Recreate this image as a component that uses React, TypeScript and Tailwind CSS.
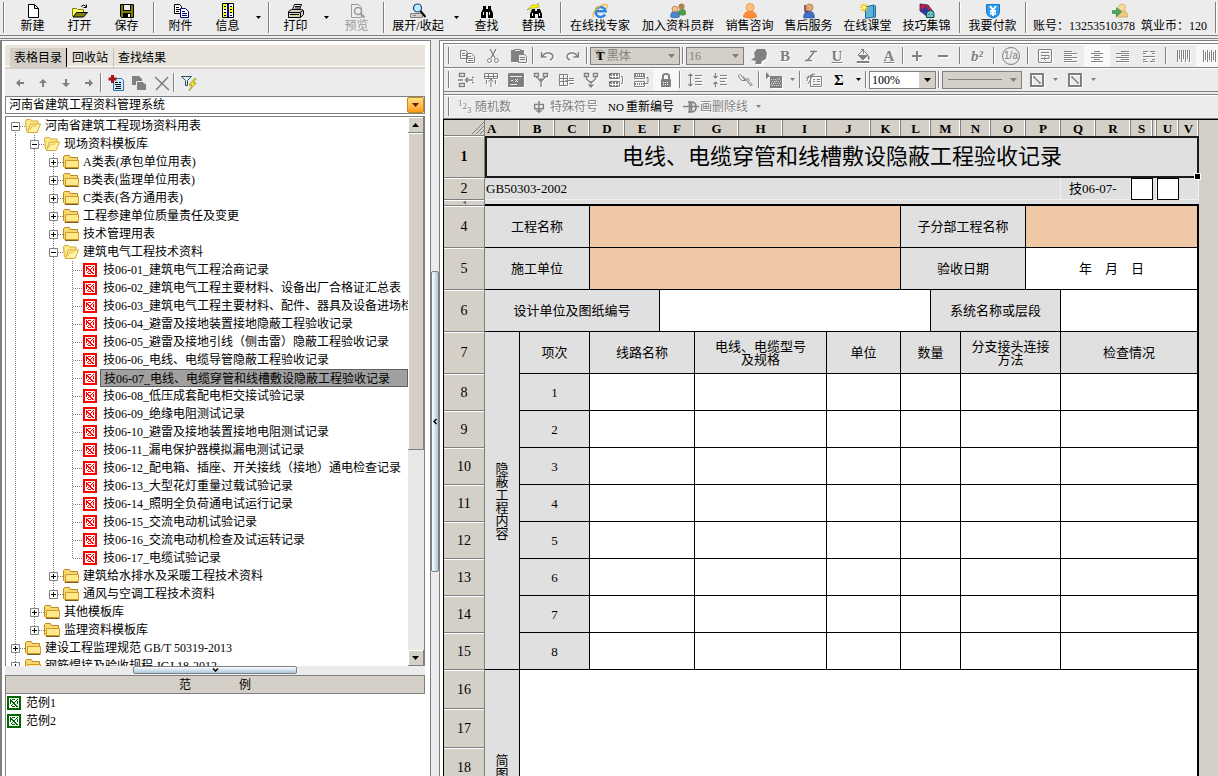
import React from "react";
import clsx from "clsx";

const song = "font-['Liberation_Serif','Noto_Sans_CJK_SC',serif]";

/* ---------- icons, all on a 16 x 16 grid ---------- */

const icons: Record<string, React.ReactNode> = {
  newFile: <path fill="#fff" stroke="#000" d="M3.5 1.5h6l4 4v9h-10zM9.500 1.500v4h4" />,
  open: (
    <>
      <path fill="#ffff66" stroke="#808000" d="M.5 13.500v-8h4l1 1h6v3" />
      <path fill="#808000" stroke="#000" d="M1 14l3.500-4.500h11l-4 4.500z" />
      <path stroke="#000" d="M9 3.500q3-3 5 0M14.500 1.500v3h-3" />
    </>
  ),
  save: (
    <>
      <path fill="#808000" stroke="#000" d="M1.500 1.500h13v13h-12l-1-1z" />
      <path fill="#ececec" stroke="#000" d="M4.500 1.500h7v6h-7z" />
      <path fill="#000" stroke="none" d="M4 10h8v4H4z" />
      <path fill="#fff" stroke="none" d="M9 11h2v3H9z" />
    </>
  ),
  attach: (
    <>
      <path fill="#fff" stroke="#000" d="M1.500 1.500h5l2 2v7h-7zM3 4.500h3M3 6.500h4M3 8.500h3" />
      <path fill="#fff" stroke="#000080" d="M7.500 5.500h5l3 3v6h-8zM9 8.500h3M9 10.500h5M9 12.500h5" />
    </>
  ),
  info: (
    <>
      <path fill="#fff" stroke="#000" d="M2.500.5h11v14h-11z" />
      <path fill="#ffff00" stroke="none" d="M3 1h4v5H3zM9 4h4v6H9zM3 9h4v5H3z" />
      <path stroke="#0000ff" strokeWidth="2" d="M8 1v13" />
      <path stroke="#000" d="M4 3.500h2M4 6.500h2M4 9.500h2M4 12.500h2M10 3.500h2M10 6.500h2M10 9.500h2M10 12.500h2" />
    </>
  ),
  print: (
    <>
      <path fill="#fff" stroke="#000" d="M4.500 6.500l2-5h7l-2 5zM7 3.500h5M6.500 5h5" />
      <path fill="#d4d0c8" stroke="#000" d="M.5 8.500l3-2h10l2 1v4l-3 3h-12z" />
      <path stroke="#000" d="M1 9.500h11l3-2M12.500 9.500v5M2 11.500h9" />
      <path fill="#ffff00" stroke="none" d="M8 12h2v1H8z" />
    </>
  ),
  preview: (
    <>
      <path d="M2.500 1.500h7l3 3v10h-10z" />
      <circle cx="9" cy="8" r="3.500" strokeWidth="1.500" />
      <path strokeWidth="2" d="M11.500 10.500l4 4" />
    </>
  ),
  expand: (
    <>
      <path fill="#d4d0c8" stroke="#808080" d="M.5 10.500h12v4h-12zM3 12.500h3" />
      <circle cx="7.500" cy="5" r="4" fill="#b9ecff" stroke="#1f3f7f" strokeWidth="1.200" />
      <path stroke="#000" strokeWidth="2" d="M10.500 8l5 6" />
    </>
  ),
  find: (
    <path
      fill="#000"
      stroke="none"
      d="M4 3h3v3h2V3h3v3l2 4v5H9V9H7v6H2v-5l2-4zM5 9H4v3h1zM11 9h-1v3h1z"
      fillRule="evenodd"
    />
  ),
  replace: (
    <>
      <path fill="#000" stroke="none" d="M6 6h3v2h2V6h3l2 5v4h-4v-4H9v4H4v-4z" />
      <path fill="#ffff00" stroke="#808000" strokeWidth=".5" d="M1 7l5-5h5l1-2 1 4-4 1H6z" />
      <path fill="#fff" stroke="none" d="M6 10h1v3H6zM13 10h1v3h-1z" />
    </>
  ),
  browser: (
    <>
      <path stroke="#2f86e0" strokeWidth="2.600" d="M13 11.500a5 5 0 1 1 .6-3.300H4" />
      <path stroke="#f2b632" strokeWidth="1.200" d="M1.500 14C-1 9 10-1 15 2q1 1-.5 3.500" />
    </>
  ),
  people: (
    <>
      <path fill="#4f9e45" stroke="#3b7a34" strokeWidth=".5" d="M8 12q0-6 4-6t4 5q-2 2-5 1z" />
      <circle cx="11.500" cy="3.500" r="3" fill="#b4814a" stroke="none" />
      <path fill="#4a86d0" stroke="#2b5da0" strokeWidth=".5" d="M.5 14q0-6 4.500-6t4.500 6q-4 2-9 0z" />
      <circle cx="5" cy="6" r="3" fill="#f0bf86" stroke="#8a5a26" strokeWidth=".5" />
    </>
  ),
  agent: (
    <>
      <circle cx="8" cy="4.500" r="4" fill="#ffbf80" stroke="#f08020" strokeWidth=".7" />
      <path fill="#ff8a3a" stroke="#e06a10" strokeWidth=".5" d="M1.500 14q0-5 5-5.500h3q5 .5 5 5.500-6 2.500-13 0z" />
    </>
  ),
  service: (
    <>
      <path fill="#3f6fc8" stroke="#24468c" strokeWidth=".5" d="M2.500 15q0-7 5.500-7t5.500 7z" />
      <circle cx="8.500" cy="4.500" r="3.500" fill="#e5ac74" stroke="#7a4a1c" strokeWidth=".5" />
      <path stroke="#7a3030" strokeWidth="1.500" d="M4 2v6l3 1" />
    </>
  ),
  book: (
    <>
      <path fill="#5cb4dc" stroke="#1f6f9c" d="M5.500 4l8-2v12l-8 1.500zM13.500 2l2 1v11l-2 1" />
      <path stroke="#ffc800" strokeWidth="1.200" d="M4 0v9M0 4.500h8M1 1.500l6 6M7 1.500l-6 6" />
      <circle cx="4" cy="4.500" r="1.500" fill="#fff8c0" stroke="none" />
    </>
  ),
  tips: (
    <>
      <path fill="#d02038" stroke="#202060" strokeWidth=".8" d="M1 1l8 1 6 8-8 2-6-4z" />
      <path fill="#3038a0" stroke="none" d="M1 8l6-5 3 5-3 5z" />
      <path fill="#68c8c8" stroke="#104848" d="M7.500 14.500v-4q1-3 4-3t3.500 3v4zM9.500 11.500h1M12.500 11.500h1" />
    </>
  ),
  pay: (
    <>
      <path fill="#2f9df0" stroke="#1478cc" d="M1.500 1.500h13v7q0 5-6.500 6.500-6.500-1.500-6.500-6.500z" />
      <path stroke="#fff" strokeWidth="1.800" d="M5 3l3 4 3-4M8 7v6M5 8h6M5 10.500h6" />
    </>
  ),
  account: (
    <>
      <path fill="#ecca80" stroke="#c89c48" strokeWidth=".6" d="M4 14q0-6 6-6.500 6 .5 6 6.500z" />
      <circle cx="10" cy="4.500" r="3.500" fill="#f8dc9c" stroke="#c89c48" strokeWidth=".6" />
      <path fill="#4fa860" stroke="#2c7840" strokeWidth=".6" d="M.5 7.500h4v-3l5 4.500-5 4.500v-3h-4z" />
    </>
  ),
  left: <path fill="currentColor" stroke="none" d="M4 8l4-4v3h4v2H8v3z" />,
  right: <path fill="currentColor" stroke="none" d="M12 8L8 4v3H4v2h4v3z" />,
  up: <path fill="currentColor" stroke="none" d="M8 4l4 4H9v4H7V8H4z" />,
  down: <path fill="currentColor" stroke="none" d="M8 12L4 8h3V4h2v4h3z" />,
  addForm: (
    <>
      <path fill="#cfeaff" stroke="#2878a8" d="M5.500 3.500h8l2 2v10h-10z" />
      <path stroke="#000" d="M7 7.500h3M11 7.500h2M7 9.500h6M8 11.500h5M7 13.500h6" />
      <path stroke="#a01818" strokeWidth="3" d="M4.500 0v8M.5 4h8" />
    </>
  ),
  copyForm: (
    <>
      <path fill="currentColor" stroke="none" d="M1 1h7l3 3v6H1z" />
      <path fill="currentColor" stroke="#ececec" d="M5.500 6.500h6l4 3v6h-10z" />
    </>
  ),
  cross: <path strokeWidth="1.600" d="M1 2l14 13M14 2L2 15" />,
  filter: (
    <>
      <path fill="#d8eef0" stroke="#305060" d="M.5 1.500h10l-4 4v5h-2v-5z" />
      <path fill="#ffee30" stroke="#908000" strokeWidth=".7" d="M14 3l-6 7h3l-3 6 7-8h-3l3-4z" />
    </>
  ),
  copy: (
    <path d="M1.500 2.500h5l2 2v6h-7zM3 5.500h3M3 7.500h4M7.500 5.500h5l3 3v6h-8zM9 8.500h3M9 10.500h5M9 12.500h5" />
  ),
  cut: (
    <>
      <path strokeWidth="1.300" d="M5 1l5 9M11 1l-5 9" />
      <circle cx="4.500" cy="12.500" r="2" />
      <circle cx="11.500" cy="12.500" r="2" />
    </>
  ),
  paste: (
    <>
      <path fill="currentColor" d="M.5 2.500h12v11h-12z" />
      <path fill="#ececec" d="M3.500 1.500h6v2h-6z" />
      <path fill="#ececec" d="M7.500 6.500h6l2 2v6h-8zM9 9.500h5M9 11.500h5" />
    </>
  ),
  undo: <path strokeWidth="1.400" d="M2.500 4v5h5M3 9q2-4 6-4t5 3q0 3-3 4" />,
  redo: <path strokeWidth="1.400" d="M13.500 4v5h-5M13 9q-2-4-6-4T2 8q0 3 3 4" />,
  globe: <path fill="currentColor" stroke="none" d="M6 1h8l2 4-1 6-4 2-1 3H4l1-3-5-1 4-3-1-4z" />,
  italic: <path strokeWidth="1.600" d="M7 3.500h7M2 12.500h7M11.500 3.500l-7 9" />,
  bucket: (
    <>
      <path fill="currentColor" d="M2 13.500h12v1H2z" />
      <path d="M3 7l5-5 5 5-5 5z" />
      <path fill="currentColor" stroke="none" d="M3 7h10l-5 5zM13 7q3 3 1 5-2-1-1-5zM6 1h3v5H8V2H6z" />
    </>
  ),
  plus: <path strokeWidth="2" d="M8 3v10M3 8h10" />,
  minus: <path strokeWidth="2" d="M3 8h10" />,
  wrap: <path d="M1.500 1.500h13v13h-13zM4 4.500h8M4 7.500h8v3H7M4 10.500h2M8.500 8.500l-2 2 2 2" />,
  alignL: <path d="M1 3.500h8M1 5.500h13M1 7.500h8M1 9.500h13M1 11.500h8M1 13.500h13" />,
  alignC: <path d="M5 3.500h6M2 5.500h12M5 7.500h6M2 9.500h12M5 11.500h6M2 13.500h12" />,
  alignR: <path d="M6 3.500h8M1 5.500h13M6 7.500h8M1 9.500h13M6 11.500h8M1 13.500h13" />,
  justify: <path d="M2 3.500h5M9 3.500h5M2 5.500h3M11 5.500h3M2 8.500h12M2 11.500h3M11 11.500h3M2 13.500h5M9 13.500h5" />,
  vAlignT: <path d="M2.500 2v12M4.500 2v9M6.500 2v12M8.500 2v9M10.500 2v12M12.500 2v9M14.500 2v12" />,
  vAlignC: <path d="M2.500 2v12M4.500 4v8M6.500 2v12M8.500 4v8M10.500 2v12M12.500 4v8M14.500 2v12" />,
  insCell: <path strokeWidth="1.400" d="M1.500 1.500h5v3h-5zM1.500 11.500h5v3h-5zM0 8h5M15 8H8M10 5.500L7.500 8l2.500 2.500M14 5.500h2M14 10.500h2" />,
  insCol: <path d="M1.500 1.500h13v5h-13zM5.500 2v4M10.500 2v4M1.500 4.500h13M8 7v8M5.500 9.500L8 7l2.500 2.500M3.500 8v4M12.500 8v4" />,
  mergeBox: (
    <>
      <path fill="currentColor" d="M.5 1.500h15v13h-15z" />
      <path stroke="#ececec" d="M2 4.500h12M3 8.500h2M7 7l3 3M10 7l-3 3M2 12.500h7" />
    </>
  ),
  split: <path strokeWidth="1.400" d="M1.500 1.500h4v3h-4zM10.500 1.500h4v3h-4zM3.500 5L8 9l4.500-4M8 9v6M6 9l2-2 2 2" />,
  delRow: <path d="M1.500 2.500h8v11h-8zM1.500 6.500h8M1.500 9.500h8M5.500 2.500v11M11 6.500h5M8 8.500h8M11 11.500h5" />,
  join: <path strokeWidth="1.400" d="M1.500 1.500h4v3h-4zM10.500 1.500h4v3h-4zM3.500 5v2L8 11l4.500-4V5M8 9v6M5.500 12.500L8 15l2.500-2.500" />,
  stackA: (
    <>
      <path strokeDasharray="2 1" strokeWidth="2" d="M2 3h9M2 6h9M2 11h9M2 14h9" />
      <path d="M1.500 1.500h10v5h-10zM1.500 9.500h10v5h-10zM13 4.500h1.500v7H13" />
    </>
  ),
  stackB: (
    <>
      <path strokeDasharray="1 1" strokeWidth="2" d="M2 3h9M2 12h9" />
      <path d="M1.500 1.500h10v5h-10zM1.500 4.500h10M1.500 9.500h10v5h-10zM13 5.500h2v6h-3" />
    </>
  ),
  lock: (
    <>
      <path strokeWidth="2" d="M5 7V4q0-2 3-2t3 2v3" />
      <path fill="currentColor" d="M3.500 7.500h9v7h-9z" />
      <path stroke="#fff" strokeDasharray="1 1" d="M5 10.500h6M5 12.500h6" />
    </>
  ),
  spaceUp: <path strokeWidth="1.200" d="M3.500 2v12M1.500 4l2-2 2 2M1.500 12l2 2 2-2M8 3.500h7M8 6.500h5M8 9.500h7M8 12.500h7" />,
  spaceDn: <path strokeWidth="1.200" d="M3.500 1v5M1.500 4l2 2 2-2M3.500 15v-5M1.500 12l2-2 2 2M8 3.500h7M8 6.500h7M8 9.500h5M8 12.500h7" />,
  slant: <path d="M1.500 3.500q3-2 3 1l4 4q-4 1-6-2zM6 4l8 10M8.500 7.500l3-1 1 2-2 1M12 11q3-1 3 3" />,
  fillArea: (
    <>
      <path fill="currentColor" stroke="none" d="M0 0l4 4-4 3zM4 4h12v12H4z" />
      <path stroke="#d4d0c8" strokeDasharray="1 1" d="M5 7.500h10M6 9.500h9M5 11.500h10M6 13.500h9M5 14l9-9" />
    </>
  ),
  form: <path d="M4.500 4.500h11v10h-11zM7 7.500h2M11 7.500h3M7 9.500h2M11 9.500h3M7 12.500h7M1 9q1-6 8-7M2 12l5-9M0 6l7-4" />,
  diag: (
    <>
      <path strokeWidth="2" d="M2 2h12v12H2z" />
      <path strokeWidth="1.500" d="M5 5l6 6M5 4v2M11 10v2" />
    </>
  ),
  phi: <path strokeWidth="1.600" d="M8 1v14M3 5h10v5H3zM5 12.500h6" />,
  strikeD: <path strokeWidth="1.600" d="M5 3h3q5 0 5 5t-5 5H5M6.500 3v10M8.500 3v10M0 7.500h16" />,
};

function Icon({ name, className }: { name: string; className?: string }) {
  return (
    <svg viewBox="0 0 16 16" fill="none" stroke="currentColor" aria-hidden="true" className={clsx("h-4 w-4 shrink-0", className)}>
      {icons[name]}
    </svg>
  );
}

function Caret({ big, className }: { big?: boolean; className?: string }) {
  return (
    <svg viewBox={big ? "0 0 7 4" : "0 0 5 3"} aria-hidden="true" className={clsx("shrink-0", big ? "h-1 w-[7px]" : "h-[3px] w-[5px]", className)}>
      <path fill="currentColor" d={big ? "M0 0h7L3.500 4z" : "M0 0h5L2.500 3z"} />
    </svg>
  );
}

function Sep({ className }: { className?: string }) {
  return <span className={clsx("w-[2px] shrink-0 self-stretch border-l border-r border-l-[#808080] border-r-white", className)} />;
}

/* ---------- top toolbar ---------- */

type MainItem = { icon?: string; label?: string; width?: string; off?: boolean; kind?: "sep" | "caret" };

const mainItems: MainItem[] = [
  { icon: "newFile", label: "新建", width: "w-[47px]" },
  { icon: "open", label: "打开", width: "w-[47px]" },
  { icon: "save", label: "保存", width: "w-[47px]" },
  { kind: "sep" },
  { icon: "attach", label: "附件", width: "w-[47px]" },
  { icon: "info", label: "信息", width: "w-[47px]" },
  { kind: "caret" },
  { kind: "sep" },
  { icon: "print", label: "打印", width: "w-[47px]" },
  { kind: "caret" },
  { icon: "preview", label: "预览", width: "w-[47px]", off: true },
  { kind: "sep" },
  { icon: "expand", label: "展开/收起", width: "w-[62px]" },
  { kind: "caret" },
  { icon: "find", label: "查找", width: "w-[47px]" },
  { icon: "replace", label: "替换", width: "w-[47px]" },
  { kind: "sep" },
  { icon: "browser", label: "在线找专家", width: "w-[72px]" },
  { icon: "people", label: "加入资料员群", width: "w-[84px]" },
  { icon: "agent", label: "销售咨询", width: "w-[59px]" },
  { icon: "service", label: "售后服务", width: "w-[59px]" },
  { icon: "book", label: "在线课堂", width: "w-[59px]" },
  { icon: "tips", label: "技巧集锦", width: "w-[59px]" },
  { kind: "sep" },
  { icon: "pay", label: "我要付款", width: "w-[59px]" },
  { kind: "sep" },
];

function MainToolbar() {
  return (
    <header className="flex h-9 shrink-0 border-b border-[#808080] pl-[3px] text-[12px] leading-[14px]">
      <Sep className="my-[2px] mr-1" />
      {mainItems.map((item, i) => {
        if (item.kind === "sep") return <Sep key={i} className="my-[2px] ml-[3px] mr-[2px]" />;
        if (item.kind === "caret")
          return (
            <button key={i} aria-label="更多" className="flex w-[14px] shrink-0 items-center justify-center">
              <Caret />
            </button>
          );
        return (
          <button
            key={i}
            className={clsx("flex shrink-0 flex-col items-center whitespace-nowrap pt-[3px]", item.width, item.off && "text-[#999]")}
          >
            <Icon name={item.icon!} />
            {item.label}
          </button>
        );
      })}
      <button className="flex shrink-0 flex-col items-center whitespace-nowrap px-1 pt-[3px]">
        <Icon name="account" />
        <span className="flex gap-[6px]">
          <span>账号：13253510378</span>
          <span>筑业币：120</span>
        </span>
      </button>
      <Sep className="my-[2px] ml-1" />
    </header>
  );
}

/* ---------- tree ---------- */

type Kind = "open" | "closed" | "leaf";
type Node = { depth: number; kind: Kind; label: string; last?: boolean; selected?: boolean };

const leaf = (label: string, extra: Partial<Node> = {}): Node => ({ depth: 3, kind: "leaf", label, ...extra });

const nodes: Node[] = [
  { depth: 0, kind: "open", label: "河南省建筑工程现场资料用表" },
  { depth: 1, kind: "open", label: "现场资料模板库" },
  { depth: 2, kind: "closed", label: "A类表(承包单位用表)" },
  { depth: 2, kind: "closed", label: "B类表(监理单位用表)" },
  { depth: 2, kind: "closed", label: "C类表(各方通用表)" },
  { depth: 2, kind: "closed", label: "工程参建单位质量责任及变更" },
  { depth: 2, kind: "closed", label: "技术管理用表" },
  { depth: 2, kind: "open", label: "建筑电气工程技术资料" },
  leaf("技06-01_建筑电气工程洽商记录"),
  leaf("技06-02_建筑电气工程主要材料、设备出厂合格证汇总表"),
  leaf("技06-03_建筑电气工程主要材料、配件、器具及设备进场检验记录"),
  leaf("技06-04_避雷及接地装置接地隐蔽工程验收记录"),
  leaf("技06-05_避雷及接地引线（侧击雷）隐蔽工程验收记录"),
  leaf("技06-06_电线、电缆导管隐蔽工程验收记录"),
  leaf("技06-07_电线、电缆穿管和线槽敷设隐蔽工程验收记录", { selected: true }),
  leaf("技06-08_低压成套配电柜交接试验记录"),
  leaf("技06-09_绝缘电阻测试记录"),
  leaf("技06-10_避雷及接地装置接地电阻测试记录"),
  leaf("技06-11_漏电保护器模拟漏电测试记录"),
  leaf("技06-12_配电箱、插座、开关接线（接地）通电检查记录"),
  leaf("技06-13_大型花灯重量过载试验记录"),
  leaf("技06-14_照明全负荷通电试运行记录"),
  leaf("技06-15_交流电动机试验记录"),
  leaf("技06-16_交流电动机检查及试运转记录"),
  leaf("技06-17_电缆试验记录", { last: true }),
  { depth: 2, kind: "closed", label: "建筑给水排水及采暖工程技术资料" },
  { depth: 2, kind: "closed", label: "通风与空调工程技术资料", last: true },
  { depth: 1, kind: "closed", label: "其他模板库" },
  { depth: 1, kind: "closed", label: "监理资料模板库", last: true },
  { depth: 0, kind: "closed", label: "建设工程监理规范 GB/T 50319-2013" },
  { depth: 0, kind: "closed", label: "钢筋焊接及验收规程 JGJ 18-2012" },
];

function Branch({ node, own, first }: { node: Node; own: boolean; first: boolean }) {
  return (
    <svg viewBox="0 0 19 18" fill="none" aria-hidden="true" className="h-[18px] w-[19px] shrink-0" stroke="#808080">
      <path strokeDasharray="1 1" d={own && node.last ? "M9.500 0v9" : first ? "M9.500 9v9" : "M9.500 0v18"} />
      {own && <path strokeDasharray="1 1" d="M10 9.500h9" />}
      {own && node.kind !== "leaf" && (
        <>
          <path fill="#fff" d="M5.500 5.500h8v8h-8z" />
          <path stroke="#000" d={node.kind === "closed" ? "M7 9.500h5M9.500 7v5" : "M7 9.500h5"} />
        </>
      )}
    </svg>
  );
}

function Folder({ open }: { open: boolean }) {
  return (
    <svg viewBox="0 0 16 16" aria-hidden="true" className="h-4 w-4 shrink-0" stroke="#c08a20">
      {open ? (
        <>
          <path fill="#ffe88a" stroke="#d8a830" d="M1.500 13.500L.5 3l1-1.500h4l1 1.500h6.500v3" />
          <path fill="#fff3a8" stroke="#d8a830" d="M2.500 14.500l3-8.500h10l-3.500 8.500z" />
          <path fill="none" stroke="#e0b848" d="M4.500 12l3-4h4" />
        </>
      ) : (
        <>
          <path fill="#f8d870" d="M.5 12.500v-10l1-1h5l1 2h7v10h-13z" />
          <path fill="#ffe98c" stroke="#d09a28" d="M2.500 13.500v-7h13v7z" />
          <path fill="none" stroke="#7a5c1c" d="M2 14.500h13.500" />
        </>
      )}
    </svg>
  );
}

function Sheet({ className }: { className: string }) {
  return (
    <svg viewBox="0 0 14 14" fill="none" shapeRendering="crispEdges" aria-hidden="true" className={clsx("h-[14px] w-[14px] shrink-0", className)}>
      <path fill="currentColor" d="M0 0h14v14H0z" />
      <path fill="#fff" d="M2 2h10v10H2z" />
      <path fill="currentColor" d="M5 3h3v1H5zM3 5h1v3H3zM10 5h1v3h-1zM5 10h3v1H5z" />
      <path stroke="currentColor" strokeWidth="2" d="M3 3.500l7 7" />
      <path stroke="currentColor" d="M10.500 3.500l-7 7M9 10.500h2" />
    </svg>
  );
}

function TreeRow({ node, first }: { node: Node; first: boolean }) {
  return (
    <li className="flex h-[18px] items-center whitespace-nowrap">
      {Array.from({ length: node.depth + 1 }, (_, i) => (
        <Branch key={i} node={node} own={i === node.depth} first={first} />
      ))}
      {node.kind === "leaf" ? <Sheet className="ml-px mr-[3px] text-[#ff0000]" /> : <Folder open={node.kind === "open"} />}
      <span
        className={clsx(
          "h-[18px] leading-[18px]",
          node.kind === "leaf" ? "min-w-0 flex-1 overflow-hidden px-[3px]" : "px-1",
          node.selected && "border border-[#606060] bg-[#a0a0a0] px-[2px] leading-4",
        )}
      >
        {node.label}
      </span>
    </li>
  );
}

function ScrollBar() {
  const bevel = "border-b border-r border-b-[#808080] border-r-[#808080] bg-[#d4d0c8] shadow-[inset_1px_1px_0_#fff]";
  return (
    <div className="flex w-4 shrink-0 flex-col bg-[#eae8e4]">
      <button aria-label="向上" className={clsx("flex h-4 items-center justify-center", bevel)}>
        <Caret big className="rotate-180" />
      </button>
      <div className={clsx("h-[317px]", bevel)} />
      <div className="flex-1" />
      <button aria-label="向下" className={clsx("flex h-4 items-center justify-center", bevel)}>
        <Caret big />
      </button>
    </div>
  );
}

function Sidebar() {
  return (
    <aside className="flex w-[431px] shrink-0 flex-col border-l-2 border-r border-t border-[#808080] bg-white pl-[3px] pr-[5px] pt-1">
      <div className="flex h-[22px] shrink-0 items-end bg-[#e8e4dc] pl-[5px] text-[12px] leading-[18px] shadow-[inset_0_-1px_0_#fff]">
        <button className="h-[19px] border-r border-black bg-[#d4d0c8] px-1">表格目录</button>
        <button className="h-[19px] border-r border-[#c8c4bc] px-[5px]">回收站</button>
        <button className="h-[19px] px-1">查找结果</button>
      </div>
      <div className="flex h-[29px] shrink-0 items-center border-t-2 border-[#d4d0c8] bg-[#ececec] pl-[3px] text-[#808080]">
        {["left", "up", "down", "right"].map((name) => (
          <button key={name} aria-label={name} className="flex w-[23px] justify-center">
            <Icon name={name} />
          </button>
        ))}
        <Sep className="my-[4px] mr-[2px]" />
        {["addForm", "copyForm", "cross"].map((name) => (
          <button key={name} aria-label={name} className="flex w-[23px] justify-center">
            <Icon name={name} />
          </button>
        ))}
        <Sep className="my-[4px] mr-[2px]" />
        <button aria-label="筛选" className="flex w-[23px] justify-center">
          <Icon name="filter" />
        </button>
      </div>
      <div className="relative flex h-[18px] shrink-0 border border-[#808080] bg-white">
        <select aria-label="系统" className="min-w-0 flex-1 appearance-none bg-transparent pl-[3px] text-[12px] leading-4">
          <option>河南省建筑工程资料管理系统</option>
        </select>
        <span className="pointer-events-none flex w-[17px] items-center justify-center rounded-[2px] border border-[#c88820] bg-linear-to-b from-[#ffe080] to-[#ff9a10]">
          <Caret big className="text-[#602000]" />
        </span>
      </div>
      <div className="mt-[2px] flex min-h-0 flex-1 border-l border-r border-t border-[#808080] text-[12px]">
        <ul className="min-w-0 flex-1 overflow-hidden">
          {nodes.map((node, i) => (
            <TreeRow key={node.label} node={node} first={i === 0} />
          ))}
        </ul>
        <ScrollBar />
      </div>
      <div className="flex h-[9px] shrink-0 justify-center bg-[#ececec]">
        <button
          aria-label="收起范例"
          className="flex h-2 w-[164px] items-center justify-center rounded-[2px] border border-[#808080] bg-linear-to-b from-white to-[#a8c8dc]"
        >
          <svg viewBox="0 0 7 4" fill="none" stroke="#000" strokeWidth="1.500" className="h-1 w-[7px]">
            <path d="M1 .5l2.500 2.500L6 .5" />
          </svg>
        </button>
      </div>
      <section className="h-[101px] shrink-0 border-l border-[#808080] text-[12px] leading-[18px]">
        <h2 className="flex h-[19px] items-center justify-center gap-12 border border-l-0 border-[#808080] bg-[#d4d0c8]">
          <span>范</span>
          <span>例</span>
        </h2>
        <ul>
          {["范例1", "范例2"].map((name) => (
            <li key={name} className="flex h-[18px] items-center gap-[5px] pl-px">
              <Sheet className="text-[#006400]" />
              {name}
            </li>
          ))}
        </ul>
      </section>
    </aside>
  );
}

/* ---------- sheet toolbars ---------- */

const toolIcon = "drop-shadow-[1px_1px_0_#fff]";

function Tool({ name, wide, on }: { name: string; wide?: boolean; on?: boolean }) {
  return (
    <button aria-label={name} className={clsx("flex h-[22px] shrink-0 items-center justify-center", wide ? "w-[26px]" : "w-[25px]", on && "bg-[#f8f8f8]")}>
      <Icon name={name} className={toolIcon} />
    </button>
  );
}

function Letter({ children, className }: { children: React.ReactNode; className?: string }) {
  return (
    <button className={clsx("w-[26px] shrink-0 text-[15px] font-bold leading-[22px] [text-shadow:1px_1px_0_#fff]", className)}>{children}</button>
  );
}

function Drop({ label, value, width, on, children }: { label: string; value: string; width: string; on?: boolean; children?: React.ReactNode }) {
  return (
    <label className={clsx("mx-[2px] flex h-[18px] shrink-0 items-center border border-[#808080]", on ? "bg-white text-black" : "bg-[#d4d0c8]", width)}>
      {children}
      <select aria-label={label} disabled={!on} className="min-w-0 flex-1 appearance-none pl-[2px] text-[12px] leading-4 opacity-100">
        <option>{value}</option>
      </select>
      <span className="pointer-events-none flex h-4 w-4 items-center justify-center bg-[#d4d0c8]">
        <Caret big />
      </span>
    </label>
  );
}

const Arrow = ({ dark }: { dark?: boolean }) => (
  <button aria-label="更多" className={clsx("flex w-[13px] shrink-0 justify-center", dark && "text-black")}>
    <Caret />
  </button>
);

function SheetToolbars() {
  const row = "flex items-center overflow-hidden border-b border-[#808080] pl-1 text-[#808080] shadow-[inset_0_1px_0_#fff]";
  return (
    <div className="shrink-0 border-l border-t border-[#808080] bg-[#ececec]">
      <div className={clsx(row, "h-6")}>
        <Sep className="my-[3px] mr-1" />
        <Tool wide name="copy" />
        <Tool wide name="cut" />
        <Tool wide name="paste" />
        <Sep className="my-[3px]" />
        <Tool wide name="undo" />
        <Tool wide name="redo" />
        <Sep className="my-[3px]" />
        <Drop label="字体" value="黑体" width="w-[90px]">
          <span className="pl-[5px] text-[13px] font-bold text-black [text-shadow:-2px_-2px_0_#999]">T</span>
        </Drop>
        <Sep className="my-[3px]" />
        <Drop label="字号" value="16" width="w-[58px]" />
        <Tool wide name="globe" />
        <Letter>B</Letter>
        <Tool wide name="italic" />
        <Letter className="underline">U</Letter>
        <Tool wide name="bucket" />
        <Letter className="underline">A</Letter>
        <Sep className="my-[3px]" />
        <Tool wide name="plus" />
        <Tool wide name="minus" />
        <Sep className="mx-[3px] my-[3px]" />
        <Letter className="italic">b²</Letter>
        <Sep className="mx-[3px] my-[3px]" />
        <button className="mx-1 h-[18px] w-[18px] shrink-0 rounded-full border border-[#808080] font-['Liberation_Sans',sans-serif] text-[10px] leading-4">
          1/a
        </button>
        <Sep className="mx-[3px] my-[3px]" />
        <Tool wide name="wrap" />
        <Tool wide name="alignL" />
        <Tool wide name="alignC" on />
        <Tool wide name="alignR" />
        <Tool wide name="justify" />
        <Sep className="mx-[3px] my-[3px]" />
        <Tool wide name="vAlignT" />
        <Tool wide name="vAlignC" on />
      </div>
      <div className={clsx(row, "h-6")}>
        <Sep className="my-[3px] mr-[3px]" />
        {["insCell", "insCol", "mergeBox", "split", "delRow", "join", "stackA", "stackB"].map((name) => (
          <Tool key={name} name={name} />
        ))}
        <Tool name="lock" on />
        <Sep className="mx-px my-[3px]" />
        <Tool name="spaceUp" />
        <Tool name="spaceDn" />
        <Tool name="slant" />
        <Sep className="mx-px my-[3px]" />
        <Tool name="fillArea" />
        <Arrow />
        <Sep className="my-[3px]" />
        <Tool name="form" />
        <Letter className="text-black">Σ</Letter>
        <Arrow dark />
        <Sep className="my-[3px]" />
        <Drop label="显示比例" value="100%" width="w-[67px]" on />
        <Sep className="my-[3px]" />
        <Drop label="线型" value="" width="w-20">
          <span className="ml-[5px] w-[54px] border-t border-[#808080]" />
        </Drop>
        <Tool name="diag" />
        <Arrow />
        <Tool name="diag" />
        <Arrow />
      </div>
      <div className={clsx(row, "mt-[2px] h-[25px] border-t text-[12px] leading-[18px]")}>
        <Sep className="my-[2px] mr-2" />
        <button className="flex items-center gap-[3px] [text-shadow:1px_1px_0_#fff]">
          <span className="flex h-4 w-[14px] text-[9px] leading-[9px]">
            <span className="self-start">1</span>
            <span className="self-center">2</span>
            <span className="self-end">3</span>
          </span>
          随机数
        </button>
        <button className="ml-5 flex items-center gap-[3px] [text-shadow:1px_1px_0_#fff]">
          <Icon name="phi" className="h-[14px]" />
          特殊符号
        </button>
        <button className="ml-[10px] flex items-center gap-[2px] text-black">
          <span className="flex w-4 justify-center text-[11px]">NO</span>
          重新编号
        </button>
        <button className="ml-[9px] flex items-center gap-px [text-shadow:1px_1px_0_#fff]">
          <Icon name="strikeD" />
          画删除线
        </button>
        <span className="ml-1">
          <Arrow />
        </span>
      </div>
    </div>
  );
}

/* ---------- sheet ---------- */

const columns: [string, string][] = [
  ["A", "w-[35px]"],
  ["B", "w-[35px]"],
  ["C", "w-[35px]"],
  ["D", "w-[35px]"],
  ["E", "w-[35px]"],
  ["F", "w-[35px]"],
  ["G", "w-[44px]"],
  ["H", "w-[44px]"],
  ["I", "w-[44px]"],
  ["J", "w-[44px]"],
  ["K", "w-[30px]"],
  ["L", "w-[30px]"],
  ["M", "w-[30px]"],
  ["N", "w-[30px]"],
  ["O", "w-[35px]"],
  ["P", "w-[35px]"],
  ["Q", "w-[35px]"],
  ["R", "w-[35px]"],
  ["S", "w-[22px]"],
  ["", "w-[4px]"],
  ["U", "w-[22px]"],
  ["V", "w-[20px]"],
];

function RowHead({ n, bold }: { n: string; bold?: boolean }) {
  return (
    <th
      scope="row"
      className={clsx(
        "border-b border-r border-[#808080] bg-[#d4d0c8] p-0 text-[14px] shadow-[inset_0_1px_0_#fff]",
        bold ? "font-bold" : "font-normal",
      )}
    >
      {n}
    </th>
  );
}

function Cell({ span, rows, fill = "bg-white", end, children }: { span: number; rows?: number; fill?: string; end?: boolean; children?: React.ReactNode }) {
  return (
    <td colSpan={span} rowSpan={rows} className={clsx("border-b border-black p-0 text-center", end ? "border-r-2" : "border-r", fill)}>
      {children}
    </td>
  );
}

const grey = "bg-[#e0e0e0]";
const peach = "bg-[#f0c8a5]";
const soft = "border-b border-r border-[#f0f0f0] bg-[#e0e0e0] p-0";

function FormSheet() {
  return (
    <div className="min-h-0 flex-1 overflow-hidden border-l border-t border-black bg-[#d4d0c8]">
      <table className="w-[755px] table-fixed border-separate border-spacing-0 text-[13px] leading-[13px]">
        <colgroup>
          <col className="w-[41px]" />
          {columns.map(([, width], i) => (
            <col key={i} className={width} />
          ))}
        </colgroup>
        <thead>
          <tr className="h-4">
            <th className="border-b border-r border-[#808080] p-0">
              <svg viewBox="0 0 12 12" aria-hidden="true" className="ml-auto h-3 w-3" fill="none" stroke="#808080">
                <path d="M0 12L12 0M4 12l8-8M8 12l4-4" />
              </svg>
            </th>
            {columns.map(([name], i) => (
              <th
                key={i}
                scope="col"
                className={clsx(
                  "border-r border-[#808080] p-0 text-[13px] font-bold shadow-[inset_-1px_0_0_#fff]",
                  name === "A" && "pl-[2px] text-left",
                )}
              >
                {name}
              </th>
            ))}
          </tr>
        </thead>
        <tbody>
          <tr className="h-[42px]">
            <RowHead n="1" bold />
            <td colSpan={22} className="relative border-2 border-[#1a1a1a] bg-[#e0e0e0] p-0 text-center text-[22px] leading-7">
              电线、电缆穿管和线槽敷设隐蔽工程验收记录
              <span className="absolute -bottom-[3px] -right-[3px] h-[5px] w-[5px] bg-black outline outline-1 outline-white" />
            </td>
          </tr>
          <tr className="h-[22px]">
            <RowHead n="2" />
            <td colSpan={16} className={clsx(soft, "pl-px")}>
              GB50303-2002
            </td>
            <td colSpan={2} className={clsx(soft, "pl-2")}>
              技06-07-
            </td>
            <td className="border border-black bg-white p-0" />
            <td className={soft} />
            <td className="border border-black bg-white p-0" />
            <td className={soft} />
          </tr>
          <tr className="h-[6px]">
            <th scope="row" className="border-b border-r border-[#808080] bg-[#d4d0c8] p-0 font-normal shadow-[inset_0_1px_0_#fff]">
              <div className="h-[3px] overflow-hidden text-[10px] leading-[3px]">3</div>
            </th>
            <td colSpan={22} className="border-b-2 border-black bg-[#e0e0e0] p-0" />
          </tr>
          <tr className="h-[42px]">
            <RowHead n="4" />
            <Cell span={3} fill={grey}>工程名称</Cell>
            <Cell span={8} fill={peach} />
            <Cell span={4} fill={grey}>子分部工程名称</Cell>
            <Cell span={7} fill={peach} end />
          </tr>
          <tr className="h-[42px]">
            <RowHead n="5" />
            <Cell span={3} fill={grey}>施工单位</Cell>
            <Cell span={8} fill={peach} />
            <Cell span={4} fill={grey}>验收日期</Cell>
            <Cell span={7} end>年　月　日</Cell>
          </tr>
          <tr className="h-[42px]">
            <RowHead n="6" />
            <Cell span={5} fill={grey}>设计单位及图纸编号</Cell>
            <Cell span={7} />
            <Cell span={4} fill={grey}>系统名称或层段</Cell>
            <Cell span={6} end />
          </tr>
          <tr className="h-[42px]">
            <RowHead n="7" />
            <Cell span={1} rows={9} fill={grey}>
              <span className="mx-auto block w-[13px]">隐蔽工程内容</span>
            </Cell>
            <Cell span={2} fill={grey}>项次</Cell>
            <Cell span={3} fill={grey}>线路名称</Cell>
            <Cell span={3} fill={grey}>
              电线、电缆型号
              <br />
              及规格
            </Cell>
            <Cell span={2} fill={grey}>单位</Cell>
            <Cell span={2} fill={grey}>数量</Cell>
            <Cell span={3} fill={grey}>
              分支接头连接
              <br />
              方法
            </Cell>
            <Cell span={6} fill={grey} end>检查情况</Cell>
          </tr>
          {[1, 2, 3, 4, 5, 6, 7, 8].map((n) => (
            <tr key={n} className="h-[37px]">
              <RowHead n={String(n + 7)} />
              <Cell span={2} fill={grey}>{n}</Cell>
              <Cell span={3} />
              <Cell span={3} />
              <Cell span={2} />
              <Cell span={2} />
              <Cell span={3} />
              <Cell span={6} end />
            </tr>
          ))}
          <tr className="h-[39px]">
            <RowHead n="16" />
            <Cell span={1} rows={4} fill={grey}>
              <span className="mx-auto block w-[13px]">简图</span>
            </Cell>
            <Cell span={21} rows={4} end />
          </tr>
          <tr className="h-[39px]">
            <RowHead n="17" />
          </tr>
          <tr className="h-[39px]">
            <RowHead n="18" />
          </tr>
          {/* rest of the merged sketch block */}
          <tr className="h-[78px]">
            <RowHead n="" />
          </tr>
        </tbody>
      </table>
    </div>
  );
}

export default function App() {
  return (
    <div className={clsx("flex h-screen flex-col overflow-hidden bg-[#ececec] text-black", song)}>
      <MainToolbar />
      <div className="h-[3px] shrink-0 border-b border-[#808080]" />
      <div className="flex min-h-0 flex-1 pt-px">
        <Sidebar />
        <div className="w-2 shrink-0">
          <button
            aria-label="收起目录"
            className="mt-[231px] flex h-[301px] w-2 items-center justify-center rounded-[2px] border border-[#808080] bg-linear-to-r from-white to-[#a8c8dc]"
          >
            <svg viewBox="0 0 4 7" fill="none" stroke="#000" strokeWidth="1.500" className="h-[7px] w-1">
              <path d="M3.500 1L1 3.500 3.500 6" />
            </svg>
          </button>
        </div>
        <main className="flex min-w-0 flex-1 flex-col border-l border-t border-[#808080] bg-white pl-[3px] pt-[2px]">
          <SheetToolbars />
          <FormSheet />
        </main>
      </div>
    </div>
  );
}
